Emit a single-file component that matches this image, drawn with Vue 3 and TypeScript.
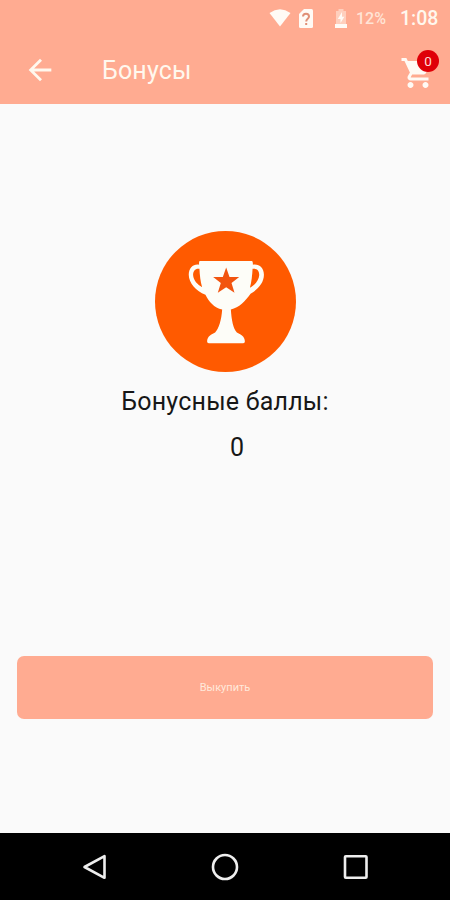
<script setup lang="ts">
import { ref } from 'vue'

const points = ref<number>(0)
const cartCount = ref<number>(0)
</script>

<template>
  <div class="screen">
    <header class="top">
      <div class="status">
        <svg class="wifi" viewBox="0 0 22 18"><path d="M0.5 4Q11 -3.4 21.5 4L11 17.5Z" /></svg>
        <svg class="sim" viewBox="0 0 14 19">
          <path d="M5 0H12.5Q14 0 14 1.5V17.5Q14 19 12.5 19H1.5Q0 19 0 17.5V5Z" />
          <path class="mark" d="M4 7.6Q4 4.8 7 4.8T10 7.6C10 9.8 7.2 9.8 7.2 12.4M7.2 14V16" />
        </svg>
        <svg class="battery" viewBox="0 0 14 19">
          <path class="dim" d="M4.5 0H9.5V2H12V15H2V2H4.5Z" />
          <path d="M1 15H13V19H1Z" />
          <path d="M8 3L3.8 10H6.5V14L10.4 7.8H8Z" />
        </svg>
        <span class="percent">12%</span>
        <span class="time">1:08</span>
      </div>
      <div class="toolbar">
        <svg class="back" viewBox="0 0 24 24"><path d="M20 11H7.83l5.59-5.59L12 4l-8 8 8 8 1.41-1.41L7.83 13H20v-2z" /></svg>
        <h1 class="title">Бонусы</h1>
        <div class="cart">
          <svg viewBox="0 0 24 24"><path d="M7 18c-1.1 0-1.99.9-1.99 2S5.9 22 7 22s2-.9 2-2-.9-2-2-2zM1 2v2h2l3.6 7.59-1.35 2.45c-.16.28-.25.61-.25.96 0 1.1.9 2 2 2h12v-2H7.42c-.14 0-.25-.11-.25-.25l.03-.12.9-1.63h7.45c.75 0 1.41-.41 1.75-1.03l3.58-6.49A1 1 0 0 0 20 4H5.21l-.94-2H1zm16 16c-1.1 0-1.99.9-1.99 2s.89 2 1.99 2 2-.9 2-2-.9-2-2-2z" /></svg>
          <span class="badge">{{ cartCount }}</span>
        </div>
      </div>
    </header>

    <main class="content">
      <svg class="trophy" viewBox="30 26 422 422">
        <circle cx="241" cy="237" r="211" fill="#ff5a00" />
        <path fill="#fdfdf8" d="M164 116H320Q323 116 323 127C342 124 356 137 356 157C356 181 338 201 316 214C300 236 282 256 257 261C259 292 264 318 275 330C286 336 299 341 299 357Q299 362 294 362H191Q186 362 186 357C186 341 199 336 210 330C221 318 229 292 231 261C207 256 191 238 181 217C153 205 131 182 131 157C131 137 145 124 162 127Q161 116 164 116Z" />
        <path fill="#ff5a00" d="M163 139C151 137 144 145 144 158C145 174 157 187 171 194C166 177 164 158 163 139ZM322 139C336 137 342 145 342 158C341 174 329 188 314 196C319 178 321 158 322 139Z" />
        <path fill="#f2540f" d="M243 135L253 164H282L259 182L268 211L243 194L218 211L227 182L204 164H233Z" />
      </svg>
      <p class="label">Бонусные баллы:</p>
      <p class="points">{{ points }}</p>
      <button class="redeem" type="button">Выкупить</button>
    </main>

    <nav class="nav">
      <svg viewBox="0 0 30 30"><path d="M24.5 4.2V25.8L4.5 15Z" /></svg>
      <svg viewBox="0 0 30 30"><circle cx="14" cy="15" r="12" /></svg>
      <svg viewBox="0 0 30 30"><rect x="4" y="4.2" width="21.5" height="21.5" rx="0.8" /></svg>
    </nav>
  </div>
</template>

<style>
body {
  margin: 0;
}
</style>

<style scoped>
.screen {
  width: 450px;
  height: 900px;
  display: flex;
  flex-direction: column;
  background: #fafafa;
  font-family: Roboto, "Liberation Sans", sans-serif;
  overflow: hidden;
}
.top {
  height: 104px;
  flex: none;
  background: #ffab91;
  color: #fff8ee;
}
.status {
  height: 36px;
  display: flex;
  align-items: center;
  justify-content: flex-end;
  padding-right: 11px;
  box-sizing: border-box;
}
.status svg {
  fill: #fffaf5;
}
.wifi {
  width: 22px;
  height: 18px;
  margin-right: 8px;
}
.sim {
  width: 14px;
  height: 19px;
  margin-right: 21px;
}
.sim .mark {
  fill: none;
  stroke: #e08f76;
  stroke-width: 2;
}
.battery {
  width: 14px;
  height: 19px;
  margin-right: 8px;
}
.battery .dim {
  opacity: 0.45;
}
.percent {
  width: 44px;
  padding-top: 1px;
  font-size: 16px;
  line-height: 20px;
  font-weight: 500;
  color: #ffe4d6;
}
.time {
  width: 39px;
  padding-top: 1px;
  font-size: 19.5px;
  line-height: 20px;
  font-weight: 500;
  white-space: nowrap;
}
.toolbar {
  height: 68px;
  display: flex;
  align-items: center;
  padding: 0 14px 0 23px;
}
.back {
  width: 34px;
  height: 34px;
  fill: #fff8ee;
}
.title {
  margin: 0 0 0 45px;
  padding-top: 2px;
  flex: 1;
  font-size: 25px;
  line-height: 32px;
  font-weight: 400;
  letter-spacing: 0.15px;
}
.cart {
  position: relative;
  width: 36px;
  height: 36px;
  margin-top: 6px;
}
.cart svg {
  display: block;
  width: 36px;
  height: 36px;
  fill: #fffaf5;
}
.badge {
  position: absolute;
  left: 17px;
  top: -5px;
  width: 22px;
  height: 22px;
  border-radius: 50%;
  background: #df0008;
  color: #ffdcd7;
  font-size: 13.5px;
  line-height: 22px;
  text-align: center;
}
.content {
  height: 729px;
  flex: none;
  display: flex;
  flex-direction: column;
  align-items: center;
  padding: 127px 17px 0;
  box-sizing: border-box;
}
.trophy {
  width: 141px;
  height: 141px;
  flex: none;
}
.label {
  margin: 14px 0 0;
  font-size: 25px;
  line-height: 32px;
  letter-spacing: 0.22px;
  color: #171717;
  white-space: nowrap;
}
.points {
  margin: 14px 0 0 24px;
  font-size: 25px;
  line-height: 32px;
  color: #171717;
}
.redeem {
  width: 416px;
  height: 63px;
  margin-top: 192px;
  padding: 0;
  border: 0;
  border-radius: 7px;
  background: #ffab91;
  color: #ffe9db;
  font-family: inherit;
  font-size: 11px;
}
.nav {
  height: 67px;
  flex: none;
  display: flex;
  justify-content: space-between;
  align-items: center;
  padding: 0 79px 0 80px;
  box-sizing: border-box;
  background: #000;
}
.nav svg {
  width: 30px;
  height: 30px;
  fill: none;
  stroke: #eee;
  stroke-width: 2.6;
  stroke-linejoin: round;
}
</style>
